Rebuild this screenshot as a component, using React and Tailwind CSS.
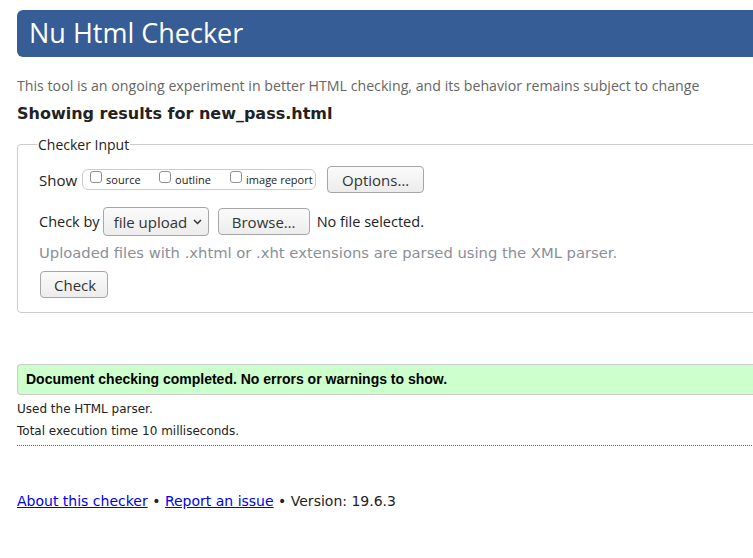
import React from 'react';

const ui = { fontFamily: '"Open Sans", "Noto Sans", sans-serif' };
const dv = { fontFamily: '"DejaVu Sans", sans-serif' };
const ar = { fontFamily: '"Liberation Sans", Arial, sans-serif' };

function Box({ label, className = '' }) {
  return (
    <label className={`flex items-center shrink-0 whitespace-nowrap ${className}`}>
      <span className="inline-block w-[12px] h-[12px] border border-[#8f8f8f] rounded-[3px] bg-white mr-[4px] -mt-[6px]" />
      <span className="text-[11px] text-[#222]">{label}</span>
    </label>
  );
}

function Btn({ children, className = '' }) {
  return (
    <button
      className={`h-[27px] px-[13px] border border-[#a6a6a6] rounded-[4px] bg-gradient-to-b from-[#fbfbfb] to-[#ececec] text-[15px] text-[#333] ${className}`}
      style={ui}
    >
      {children}
    </button>
  );
}

export default function App() {
  return (
    <div className="w-[753px] h-[558px] overflow-hidden bg-white">
      <div className="w-[800px] pl-[17px] pt-[10px]">
        <h1
          className="h-[47px] bg-[#365d95] rounded-l-[6px] text-white text-[27px] pl-[12px] flex items-center"
          style={ui}
        >
          Nu Html Checker
        </h1>

        <p className="mt-[18px] text-[14.2px] text-[#666]" style={ui}>
          This tool is an ongoing experiment in better HTML checking, and its behavior remains subject to change
        </p>

        <h2 className="mt-[6px] text-[16px] font-bold text-[#222]" style={dv}>
          Showing results for new_pass.html
        </h2>

        <fieldset className="mt-[8px] border border-[#ccc] rounded-l-[4px] pl-[21px] h-[179px]" style={ui}>
          <legend className="text-[14px] text-[#222] px-[1px] -ml-[2px]">Checker Input</legend>

          <div className="flex items-center mt-[11px]">
            <span className="text-[15px] text-[#222] mr-[5px]">Show</span>
            <div className="flex items-center h-[21px] border border-[#ccc] rounded-[6px] pl-[7px] w-[234px] shrink-0 overflow-hidden">
              <Box label="source" className="w-[69px]" />
              <Box label="outline" className="w-[71px]" />
              <Box label="image report" />
            </div>
            <Btn className="ml-[11px] w-[97px]">Options…</Btn>
          </div>

          <div className="flex items-center mt-[14px]">
            <span className="text-[14.5px] text-[#222] mr-[3px]">Check by</span>
            <div className="h-[29px] w-[106px] border border-[#a6a6a6] rounded-[4px] bg-gradient-to-b from-[#fbfbfb] to-[#ececec] flex items-center pl-[10px] text-[15px] text-[#333]">
              file upload
              <svg width="9" height="6" viewBox="0 0 9 6" className="ml-[6px]">
                <path d="M1 1l3.5 3.5L8 1" stroke="#333" strokeWidth="1.5" fill="none" />
              </svg>
            </div>
            <Btn className="ml-[9px] w-[92px]">Browse…</Btn>
            <span className="ml-[7px] text-[14.5px] text-[#222]">No file selected.</span>
          </div>

          <p className="mt-[6px] text-[14.75px] text-[#8a8f99]" style={dv}>
            Uploaded files with .xhtml or .xht extensions are parsed using the XML parser.
          </p>

          <Btn className="mt-[7px] ml-[1px] w-[68px]">Check</Btn>
        </fieldset>

        <div
          className="mt-[51px] h-[31px] bg-[#ccffcc] border border-[#ccc] border-r-0 rounded-l-[4px] flex items-center pl-[8px] text-[14px] font-bold text-black"
          style={ar}
        >
          Document checking completed. No errors or warnings to show.
        </div>

        <div className="text-[12px] text-[#222] border-b border-dotted border-[#666] pb-[5px]" style={dv}>
          <p className="mt-[5px]">Used the HTML parser.</p>
          <p className="mt-[4px]">Total execution time 10 milliseconds.</p>
        </div>

        <p className="mt-[45px] text-[14px] text-[#222]" style={dv}>
          <a href="#" className="text-[#00e] underline">About this checker</a>
          {' • '}
          <a href="#" className="text-[#00e] underline">Report an issue</a>
          {' • Version: 19.6.3'}
        </p>
      </div>
    </div>
  );
}
